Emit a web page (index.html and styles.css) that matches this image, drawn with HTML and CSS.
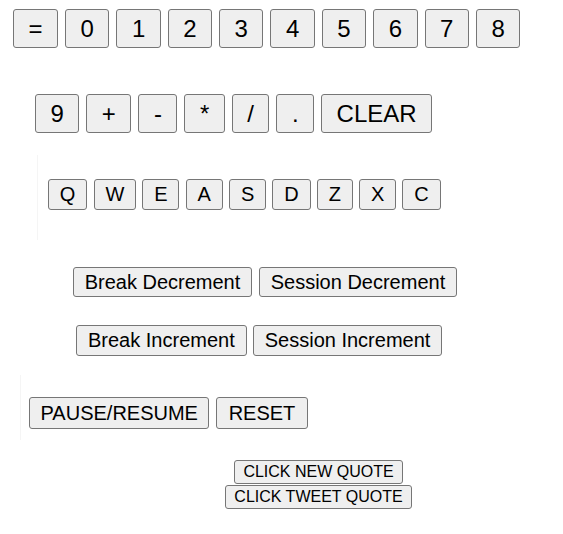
FILE: index.html
```html
<!DOCTYPE html>
<html>
<head>
<meta charset="utf-8">
<link rel="stylesheet" href="styles.css">
</head>
<body>
<div class="row row-digits">
  <button class="btn btn-lg">=</button>
  <button class="btn btn-lg">0</button>
  <button class="btn btn-lg">1</button>
  <button class="btn btn-lg">2</button>
  <button class="btn btn-lg">3</button>
  <button class="btn btn-lg">4</button>
  <button class="btn btn-lg">5</button>
  <button class="btn btn-lg">6</button>
  <button class="btn btn-lg">7</button>
  <button class="btn btn-lg">8</button>
</div>
<div class="row row-ops">
  <button class="btn btn-lg">9</button>
  <button class="btn btn-lg">+</button>
  <button class="btn btn-lg">-</button>
  <button class="btn btn-lg">*</button>
  <button class="btn btn-lg">/</button>
  <button class="btn btn-lg">.</button>
  <button class="btn btn-lg">CLEAR</button>
</div>
<div class="pad-wrap">
  <div class="row row-keys">
    <button class="btn btn-key">Q</button>
    <button class="btn btn-key">W</button>
    <button class="btn btn-key">E</button>
    <button class="btn btn-key">A</button>
    <button class="btn btn-key">S</button>
    <button class="btn btn-key">D</button>
    <button class="btn btn-key">Z</button>
    <button class="btn btn-key">X</button>
    <button class="btn btn-key">C</button>
  </div>
</div>
<div class="row row-dec">
  <button class="btn btn-md btn-dec">Break Decrement</button>
  <button class="btn btn-md btn-dec">Session Decrement</button>
</div>
<div class="row row-inc">
  <button class="btn btn-md">Break Increment</button>
  <button class="btn btn-md">Session Increment</button>
</div>
<div class="timer-wrap">
  <div class="row row-timer">
    <button class="btn btn-timer btn-pause">PAUSE/RESUME</button>
    <button class="btn btn-timer">RESET</button>
  </div>
</div>
<div class="quotes">
  <button class="btn btn-sm">CLICK NEW QUOTE</button>
  <button class="btn btn-sm">CLICK TWEET QUOTE</button>
</div>
</body>
</html>
```
FILE: styles.css
```css
html, body {
  margin: 0;
  padding: 0;
  background: #ffffff;
}
body {
  font-family: "Liberation Sans", Arial, sans-serif;
  color: #000;
  width: 563px;
}
.row {
  display: flex;
  align-items: flex-start;
}
.btn {
  font-family: "Liberation Sans", Arial, sans-serif;
  color: #000;
  background: #efefef;
  border: 1px solid #767676;
  border-radius: 3px;
  margin: 0;
  white-space: nowrap;
  box-sizing: border-box;
}
.btn-lg {
  font-size: 24px;
  line-height: 27px;
  padding: 5px 14.5px;
}
.btn-key {
  font-size: 20px;
  line-height: 23px;
  padding: 3px 10.85px;
}
.btn-md {
  font-size: 20px;
  line-height: 23px;
  padding: 3px 11px;
}
.btn-dec {
  line-height: 22px;
  padding: 3px 10.7px;
}
.btn-timer {
  font-size: 20px;
  line-height: 24px;
  padding: 3px 11.2px;
}
.btn-pause {
  padding: 3px 10.5px;
}
.btn-sm {
  font-size: 16px;
  line-height: 18px;
  padding: 2px 8.5px;
}
.row-digits {
  padding-top: 9px;
  padding-left: 13px;
  gap: 7px;
}
.row-ops {
  margin-top: 46px;
  padding-left: 35px;
  gap: 7px;
}
.pad-wrap {
  margin-top: 22px;
  margin-left: 37px;
  height: 85px;
  box-sizing: border-box;
  border-left: 1px solid #f5f5f5;
  padding-top: 24px;
  padding-left: 10px;
}
.row-keys {
  gap: 6.3px;
}
.row-dec {
  margin-top: 27px;
  padding-left: 73px;
  gap: 7px;
}
.row-inc {
  margin-top: 28px;
  padding-left: 76px;
  gap: 6px;
}
.timer-wrap {
  margin-top: 19px;
  margin-left: 20px;
  height: 65px;
  box-sizing: border-box;
  border-left: 1px solid #f5f5f5;
  padding-top: 22px;
  padding-left: 8px;
}
.row-timer {
  gap: 7px;
}
.quotes {
  margin-top: 20px;
  padding-left: 74px;
  display: flex;
  flex-direction: column;
  align-items: center;
  gap: 1px;
}
```
